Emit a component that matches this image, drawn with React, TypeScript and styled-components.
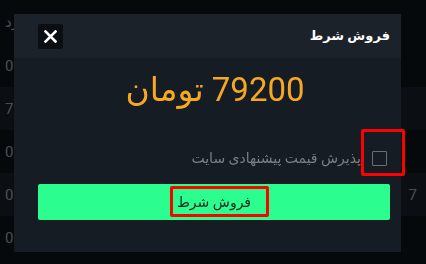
import React from "react";
import styled, { createGlobalStyle } from "styled-components";

const Global = createGlobalStyle`
  html, body { margin: 0; padding: 0; background: #06090c; }
  body { width: 426px; height: 264px; overflow: hidden; font-family: Roboto, "DejaVu Sans", sans-serif; }
`;

const Table = styled.div`
  display: flex;
  flex-direction: column;
  width: 426px;
  height: 264px;
`;

const Row = styled.div<{ $alt?: boolean; $h?: number }>`
  height: ${(p) => p.$h ?? 43}px;
  background: ${(p) => (p.$alt ? "#0b0f13" : "#06090c")};
  display: flex;
  align-items: center;
  justify-content: space-between;
  padding: 0 9px 0 5px;
  color: #4a4f55;
  font-size: 15px;
  flex-shrink: 0;
`;

const Cell = styled.span`
  font-family: Roboto, "DejaVu Sans", sans-serif;
`;

const Overlay = styled.div`
  position: fixed;
  left: 14px;
  top: 14px;
  width: 387px;
  height: 238px;
  background: #161c24;
  display: flex;
  flex-direction: column;
  direction: rtl;
`;

const Header = styled.div`
  height: 44px;
  background: #1b2229;
  display: flex;
  align-items: center;
  justify-content: space-between;
  padding: 0 11px 0 24px;
  flex-shrink: 0;
`;

const Title = styled.div`
  color: #ffffff;
  font-size: 13px;
  font-weight: bold;
  margin-top: -2px;
`;

const CloseBtn = styled.button`
  width: 25px;
  height: 25px;
  border: none;
  border-radius: 2px;
  background: #0b0f14;
  display: flex;
  align-items: center;
  justify-content: center;
  padding: 0;
`;

const Body = styled.div`
  display: flex;
  flex-direction: column;
  padding: 12px 11px 0 24px;
`;

const Price = styled.div`
  color: #f7a823;
  font-size: 33px;
  line-height: 40px;
  text-align: center;
  font-family: Roboto, "DejaVu Sans", sans-serif;
  padding-left: 2px;
`;

const CheckRow = styled.label`
  display: flex;
  align-items: center;
  gap: 11px;
  margin-top: 40px;
  padding-right: 3px;
  height: 16px;
`;

const Box = styled.span`
  position: relative;
  width: 13px;
  height: 13px;
  border: 1.5px solid #6b6e72;
  border-radius: 1px;
  flex-shrink: 0;
  &::after {
    content: "";
    position: absolute;
    left: -12.5px;
    right: -19px;
    top: -23px;
    bottom: -11.5px;
    border: 3.5px solid #ff0000;
    border-radius: 2px;
  }
`;

const Label = styled.span`
  color: #7c7f84;
  font-size: 14px;
`;

const SubmitBtn = styled.button`
  margin-top: 18px;
  height: 36px;
  width: 100%;
  border: none;
  border-radius: 2px;
  background: #2bfd8f;
  display: flex;
  align-items: center;
  justify-content: center;
  direction: rtl;
  font-family: Roboto, "DejaVu Sans", sans-serif;
`;

const BtnText = styled.span`
  position: relative;
  color: #1c2620;
  font-size: 14px;
  &::after {
    content: "";
    position: absolute;
    left: -7px;
    right: -18px;
    top: -8px;
    bottom: -7px;
    border: 3.5px solid #ff0000;
    border-radius: 2px;
  }
`;

export default function App() {
  return (
    <>
      <Global />
      <Table>
        <Row $h={44}><Cell>رد</Cell><Cell></Cell></Row>
        <Row><Cell>0</Cell><Cell></Cell></Row>
        <Row $alt><Cell>7</Cell><Cell></Cell></Row>
        <Row><Cell>0</Cell><Cell></Cell></Row>
        <Row $alt><Cell>0</Cell><Cell>7</Cell></Row>
        <Row><Cell>0</Cell><Cell></Cell></Row>
      </Table>
      <Overlay>
        <Header>
          <Title>فروش شرط</Title>
          <CloseBtn>
            <svg width="13" height="13" viewBox="0 0 13 13">
              <path d="M1.5 1.5 L11.5 11.5 M11.5 1.5 L1.5 11.5" stroke="#fff" strokeWidth="2.6" strokeLinecap="square" />
            </svg>
          </CloseBtn>
        </Header>
        <Body>
          <Price>79200 تومان</Price>
          <CheckRow>
            <Box />
            <Label>پذیرش قیمت پیشنهادی سایت</Label>
          </CheckRow>
          <SubmitBtn>
            <BtnText>فروش شرط</BtnText>
          </SubmitBtn>
        </Body>
      </Overlay>
    </>
  );
}
